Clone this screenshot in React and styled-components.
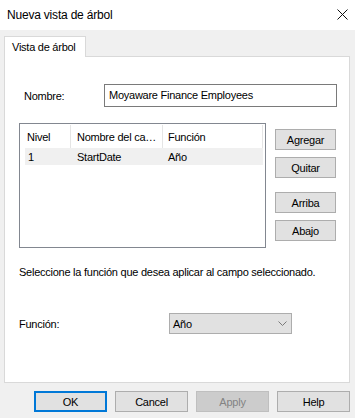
import React from "react";
import styled, { createGlobalStyle } from "styled-components";

const Global = createGlobalStyle`
  html, body { margin: 0; padding: 0; background: #f0f0f0; }
  body {
    font-family: "Liberation Sans", Arial, sans-serif;
    font-size: 11px;
    letter-spacing: -0.25px;
    color: #000;
  }
  * { box-sizing: border-box; }
`;

const Window = styled.div`
  width: 355px;
  height: 418px;
  background: #f0f0f0;
  display: flex;
  flex-direction: column;
`;

const TitleBar = styled.div`
  height: 30px;
  background: #fff;
  display: flex;
  align-items: center;
  justify-content: space-between;
  padding: 0 7px 1px 7px;
`;

const Title = styled.span`
  font-size: 12px;
  letter-spacing: -0.2px;
`;

const Body = styled.div`
  flex: 1;
  display: flex;
  flex-direction: column;
  padding: 6px 5px 0 4px;
`;

const TabStrip = styled.div`
  display: flex;
  height: 20px;
`;

const Tab = styled.div`
  position: relative;
  z-index: 1;
  width: 82px;
  height: 21px;
  background: #fff;
  border: 1px solid #d9d9d9;
  border-bottom: none;
  padding: 3px 0 0 7px;
  line-height: 14px;
`;

const Panel = styled.div`
  height: 327px;
  background: #fff;
  border: 1px solid #d9d9d9;
  display: flex;
  flex-direction: column;
`;

const NameRow = styled.div`
  display: flex;
  align-items: center;
  margin-top: 27px;
  padding-left: 19px;
`;

const Label = styled.label`
  width: ${(p) => p.$w}px;
  flex-shrink: 0;
`;

const TextInput = styled.div`
  width: 233px;
  height: 23px;
  border: 1px solid #7a7a7a;
  display: flex;
  align-items: center;
  padding: 0 0 1px 4px;
`;

const ListRow = styled.div`
  display: flex;
  margin-top: 16px;
  padding-left: 14px;
`;

const ListBox = styled.div`
  width: 247px;
  height: 125px;
  border: 1px solid #828790;
  display: flex;
  flex-direction: column;
`;

const HeaderRow = styled.div`
  display: flex;
  height: 24px;
  padding-top: 1px;
`;

const HeadCell = styled.div`
  width: ${(p) => p.$w}px;
  border-right: 1px solid #e5e5e5;
  padding-left: ${(p) => p.$pad}px;
  display: flex;
  align-items: center;
  white-space: nowrap;
  overflow: hidden;
`;

const DataRow = styled.div`
  display: flex;
  margin-left: 5px;
  width: 238px;
  height: 17px;
  background: #f0f0f0;
  align-items: center;
`;

const DataCell = styled.div`
  width: ${(p) => p.$w}px;
  padding-left: ${(p) => p.$pad}px;
  white-space: nowrap;
`;

const SideButtons = styled.div`
  display: flex;
  flex-direction: column;
  margin: 6px 0 0 9px;
`;

const Button = styled.button`
  font: inherit;
  letter-spacing: inherit;
  color: ${(p) => (p.$disabled ? "#838383" : "#000")};
  width: ${(p) => p.$w}px;
  height: 21px;
  margin-top: ${(p) => p.$mt || 0}px;
  padding: 0;
  background: ${(p) => (p.$disabled ? "#cccccc" : "#e1e1e1")};
  border: ${(p) =>
    p.$primary
      ? "2px solid #0078d7"
      : p.$disabled
      ? "1px solid #bfbfbf"
      : "1px solid #adadad"};
  border-radius: 0;
  display: flex;
  align-items: center;
  justify-content: center;
`;

const Hint = styled.div`
  margin-top: 17px;
  padding-left: 14px;
  line-height: 14px;
`;

const FuncRow = styled.div`
  display: flex;
  align-items: center;
  margin-top: 34px;
  padding-left: 14px;
`;

const Select = styled.div`
  width: 123px;
  height: 21px;
  background: #e1e1e1;
  border: 1px solid #adadad;
  display: flex;
  align-items: center;
  justify-content: space-between;
  padding: 0 4px 0 3px;
`;

const Footer = styled.div`
  display: flex;
  justify-content: flex-end;
  gap: 8px;
  margin-top: 8px;
`;

const Close = () => (
  <svg width="11" height="11" viewBox="0 0 11 11">
    <path d="M0.5 0.5 L10.5 10.5 M10.5 0.5 L0.5 10.5" stroke="#111" strokeWidth="1" fill="none" />
  </svg>
);

const Chevron = () => (
  <svg width="9" height="6" viewBox="0 0 9 6">
    <path d="M0.5 0.5 L4.5 4.5 L8.5 0.5" stroke="#7a7a7a" strokeWidth="1" fill="none" />
  </svg>
);

export default function App() {
  return (
    <>
      <Global />
      <Window>
        <TitleBar>
          <Title>Nueva vista de árbol</Title>
          <Close />
        </TitleBar>
        <Body>
          <TabStrip>
            <Tab>Vista de árbol</Tab>
          </TabStrip>
          <Panel>
            <NameRow>
              <Label $w={80}>Nombre:</Label>
              <TextInput>Moyaware Finance Employees</TextInput>
            </NameRow>
            <ListRow>
              <ListBox>
                <HeaderRow>
                  <HeadCell $w={51} $pad={7}>Nivel</HeadCell>
                  <HeadCell $w={92} $pad={6}>Nombre del ca…</HeadCell>
                  <HeadCell $w={100} $pad={5}>Función</HeadCell>
                </HeaderRow>
                <DataRow>
                  <DataCell $w={45} $pad={3}>1</DataCell>
                  <DataCell $w={92} $pad={7}>StartDate</DataCell>
                  <DataCell $w={100} $pad={6}>Año</DataCell>
                </DataRow>
              </ListBox>
              <SideButtons>
                <Button $w={61}>Agregar</Button>
                <Button $w={61} $mt={7}>Quitar</Button>
                <Button $w={61} $mt={14}>Arriba</Button>
                <Button $w={61} $mt={7}>Abajo</Button>
              </SideButtons>
            </ListRow>
            <Hint>Seleccione la función que desea aplicar al campo seleccionado.</Hint>
            <FuncRow>
              <Label $w={150}>Función:</Label>
              <Select>
                <span>Año</span>
                <Chevron />
              </Select>
            </FuncRow>
          </Panel>
          <Footer>
            <Button $w={73} $primary>OK</Button>
            <Button $w={73}>Cancel</Button>
            <Button $w={73} $disabled>Apply</Button>
            <Button $w={73}>Help</Button>
          </Footer>
        </Body>
      </Window>
    </>
  );
}
